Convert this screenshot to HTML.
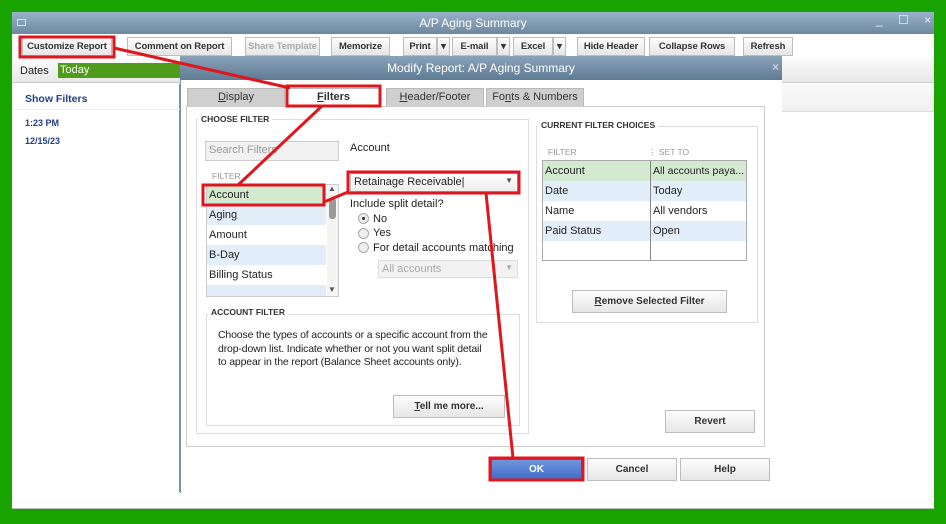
<!DOCTYPE html>
<html><head><meta charset="utf-8"><style>
*{margin:0;padding:0;box-sizing:border-box;white-space:nowrap}
body{width:946px;height:524px;background:#19a300;position:relative;overflow:hidden;font-family:"Liberation Sans",Arial,sans-serif;font-size:11px;color:#222}
.a{position:absolute}
.btn{position:absolute;background:linear-gradient(#fdfdfd,#e6e6e6);border:1px solid #bdbdbd;font-weight:bold;color:#333;text-align:center;font-size:10px;overflow:hidden}
.tb{height:19px;line-height:17px;top:37px;font-size:9.5px;letter-spacing:-0.1px}
.tab{position:absolute;top:88px;height:19px;background:#cfcfcf;border:1px solid #b9b9b9;text-align:center;line-height:17px;font-size:11px;color:#333}
.row{position:absolute;height:20px;line-height:20px;padding-left:2px;font-size:11px}
.lbl{font-size:8.5px;font-weight:bold;color:#333;background:#fff;padding:0 3px}
.grp{position:absolute;border:1px solid #ddd}
</style></head><body>
<div class="a" style="left:12px;top:12px;width:922px;height:497px;background:#fff;border-bottom:1px solid #bbb"></div>
<div class="a" style="left:12px;top:12px;width:922px;height:22px;background:linear-gradient(#9ab2c8,#6c879f);color:#fff;font-size:12px;text-align:center;line-height:22px">A/P Aging Summary</div>
<div class="a" style="left:17px;top:19px;width:9px;height:7px;border:1px solid #dde;"></div>
<div class="a" style="left:876px;top:13px;color:#eef;font-size:12px;letter-spacing:6px">_ ☐ ×</div>
<div class="a" style="left:12px;top:34px;width:922px;height:24px;background:#fff"></div>
<div class="btn tb" style="left:22px;width:90px">Customize Report</div>
<div class="btn tb" style="left:127px;width:105px">Comment on Report</div>
<div class="btn tb" style="left:245px;width:75px;color:#aaa">Share Template</div>
<div class="btn tb" style="left:331px;width:59px">Memorize</div>
<div class="btn tb" style="left:403px;width:34px">Print</div><div class="btn tb" style="left:437px;width:13px">▾</div>
<div class="btn tb" style="left:452px;width:45px">E-mail</div><div class="btn tb" style="left:497px;width:13px">▾</div>
<div class="btn tb" style="left:513px;width:40px">Excel</div><div class="btn tb" style="left:553px;width:13px">▾</div>
<div class="btn tb" style="left:577px;width:68px">Hide Header</div>
<div class="btn tb" style="left:649px;width:86px">Collapse Rows</div>
<div class="btn tb" style="left:743px;width:50px">Refresh</div>
<div class="a" style="left:12px;top:58px;width:922px;height:25px;background:linear-gradient(#fafafa,#e8e8e8);border-bottom:1px solid #ccc"></div>
<div class="a" style="left:20px;top:65px;font-size:11px">Dates</div>
<div class="a" style="left:58px;top:63px;width:125px;height:15px;background:#4f9c1a;color:#fff;font-size:11px;padding-left:2px;line-height:15px">Today</div>
<div class="a" style="left:12px;top:84px;width:168px;height:408px;background:#fff;border-right:1px solid #7890a8"></div>
<div class="a" style="left:25px;top:93px;font-weight:bold;color:#223d8a;font-size:10.5px">Show Filters</div>
<div class="a" style="left:12px;top:109px;width:168px;border-top:1px solid #eee"></div>
<div class="a" style="left:25px;top:118px;font-weight:bold;color:#223d8a;font-size:9px">1:23 PM</div>
<div class="a" style="left:25px;top:136px;font-weight:bold;color:#223d8a;font-size:9px">12/15/23</div>
<div class="a" style="left:782px;top:84px;width:152px;height:28px;background:linear-gradient(#fafafa,#f0f0f0);border-bottom:1px solid #ddd"></div>
<div class="a" style="left:180px;top:56px;width:602px;height:437px;background:#fff;border-left:1px solid #7890a8"></div>
<div class="a" style="left:180px;top:56px;width:602px;height:24px;background:linear-gradient(#8aa2b9,#5f7b94);color:#fff;font-size:12px;text-align:center;line-height:24px">Modify Report: A/P Aging Summary</div>
<div class="a" style="left:772px;top:60px;color:#ccd;font-size:12px;font-weight:bold">×</div>
<div class="tab" style="left:187px;width:98px"><u>D</u>isplay</div>
<div class="tab" style="left:287px;width:93px;background:#fff;border-bottom-color:#fff;font-weight:bold"><u>F</u>ilters</div>
<div class="tab" style="left:386px;width:98px"><u>H</u>eader/Footer</div>
<div class="tab" style="left:486px;width:98px">Fo<u>n</u>ts &amp; Numbers</div>
<div class="a" style="left:186px;top:106px;width:579px;height:341px;border:1px solid #ccc;background:#fff"></div>
<div class="grp" style="left:196px;top:119px;width:333px;height:315px"></div>
<div class="a lbl" style="left:198px;top:114px">CHOOSE FILTER</div>
<div class="a" style="left:205px;top:141px;width:134px;height:20px;background:#f2f2f2;border:1px solid #ccc;color:#999;font-size:11px;padding:2px 3px">Search Filters</div>
<div class="a" style="left:350px;top:142px;font-size:11px">Account</div>
<div class="a" style="left:212px;top:171px;font-size:8.5px;color:#999">FILTER</div>
<div class="a" style="left:206px;top:184px;width:133px;height:113px;border:1px solid #ccc;background:#fff"></div>
<div class="row" style="left:207px;top:185px;width:119px;background:#d3ead0">Account</div>
<div class="row" style="left:207px;top:205px;width:119px;background:#e3eefb">Aging</div>
<div class="row" style="left:207px;top:225px;width:119px">Amount</div>
<div class="row" style="left:207px;top:245px;width:119px;background:#e3eefb">B-Day</div>
<div class="row" style="left:207px;top:265px;width:119px">Billing Status</div>
<div class="row" style="left:207px;top:285px;width:119px;height:11px;background:#e3eefb"></div>
<div class="a" style="left:327px;top:185px;width:11px;height:111px;background:#f4f4f4"></div>
<div class="a" style="left:328px;top:184px;font-size:8px;color:#555">▲</div>
<div class="a" style="left:329px;top:198px;width:7px;height:21px;background:#999;border-radius:3px"></div>
<div class="a" style="left:328px;top:285px;font-size:8px;color:#555">▼</div>
<div class="a" style="left:350px;top:173px;width:168px;height:19px;background:linear-gradient(#fff,#eee);border:1px solid #bbb;font-size:11px;padding:2px 3px">Retainage Receivable|<span style="position:absolute;right:4px;top:2px;font-size:8px;color:#555">▼</span></div>
<div class="a" style="left:350px;top:198px;font-size:11px">Include split detail?</div>
<div class="a" style="left:358px;top:213px;width:11px;height:11px;border:1px solid #aaa;border-radius:50%;background:#eee"><div style="margin:3px;width:3px;height:3px;background:#333;border-radius:50%"></div></div>
<div class="a" style="left:373px;top:213px">No</div>
<div class="a" style="left:358px;top:228px;width:11px;height:11px;border:1px solid #aaa;border-radius:50%;background:#eee"></div>
<div class="a" style="left:373px;top:227px">Yes</div>
<div class="a" style="left:358px;top:242px;width:11px;height:11px;border:1px solid #aaa;border-radius:50%;background:#eee"></div>
<div class="a" style="left:373px;top:242px">For detail accounts matching</div>
<div class="a" style="left:378px;top:260px;width:140px;height:18px;background:#f2f2f2;border:1px solid #ddd;color:#aaa;padding:2px 3px;font-size:11px">All accounts<span style="position:absolute;right:4px;top:2px;font-size:8px">▼</span></div>
<div class="grp" style="left:206px;top:314px;width:314px;height:112px"></div>
<div class="a lbl" style="left:208px;top:307px">ACCOUNT FILTER</div>
<div class="a" style="left:218px;top:329px;font-size:10.5px;line-height:13.5px;letter-spacing:-0.15px">Choose the types of accounts or a specific account from the<br>drop-down list. Indicate whether or not you want split detail<br>to appear in the report (Balance Sheet accounts only).</div>
<div class="btn" style="left:393px;top:395px;width:112px;height:23px;line-height:21px"><u>T</u>ell me more...</div>
<div class="grp" style="left:536px;top:126px;width:222px;height:197px"></div>
<div class="a lbl" style="left:538px;top:120px">CURRENT FILTER CHOICES</div>
<div class="a" style="left:548px;top:147px;font-size:8.5px;color:#999">FILTER</div>
<div class="a" style="left:648px;top:147px;font-size:8.5px;color:#999">⋮ SET TO</div>
<div class="a" style="left:542px;top:160px;width:205px;height:101px;border:1px solid #aaa;background:#fff"></div>
<div class="row" style="left:543px;top:161px;width:203px;background:#d3ead0">Account</div>
<div class="row" style="left:543px;top:181px;width:203px;background:#e3eefb">Date</div>
<div class="row" style="left:543px;top:201px;width:203px">Name</div>
<div class="row" style="left:543px;top:221px;width:203px;background:#e3eefb">Paid Status</div>
<div class="a" style="left:650px;top:161px;height:99px;border-left:1px solid #888"></div>
<div class="a" style="left:653px;top:165px;font-size:10.5px">All accounts paya...</div>
<div class="a" style="left:653px;top:185px">Today</div>
<div class="a" style="left:653px;top:205px">All vendors</div>
<div class="a" style="left:653px;top:225px">Open</div>
<div class="btn" style="left:572px;top:290px;width:155px;height:23px;line-height:21px"><u>R</u>emove Selected Filter</div>
<div class="btn" style="left:665px;top:410px;width:90px;height:23px;line-height:21px">Revert</div>
<div class="btn" style="left:491px;top:459px;width:91px;height:21px;line-height:19px;background:linear-gradient(#6f95dc,#3f6fc8);color:#fff;border-color:#36c">OK</div>
<div class="btn" style="left:587px;top:458px;width:90px;height:23px;line-height:21px">Cancel</div>
<div class="btn" style="left:680px;top:458px;width:90px;height:23px;line-height:21px">Help</div>
<svg class="a" style="left:0;top:0" width="946" height="524" fill="none" stroke="#e0161e" stroke-width="3">
<rect x="20" y="37" width="94" height="20"/>
<rect x="287" y="86" width="93" height="20"/>
<rect x="203" y="185" width="121" height="20"/>
<rect x="348" y="172" width="171" height="21"/>
<rect x="490" y="458" width="93" height="22"/>
<line x1="114" y1="48" x2="290" y2="88"/>
<line x1="322" y1="106" x2="238" y2="185"/>
<line x1="324" y1="202" x2="348" y2="192"/>
<line x1="486" y1="193" x2="513" y2="458"/>
</svg>
</body></html>
